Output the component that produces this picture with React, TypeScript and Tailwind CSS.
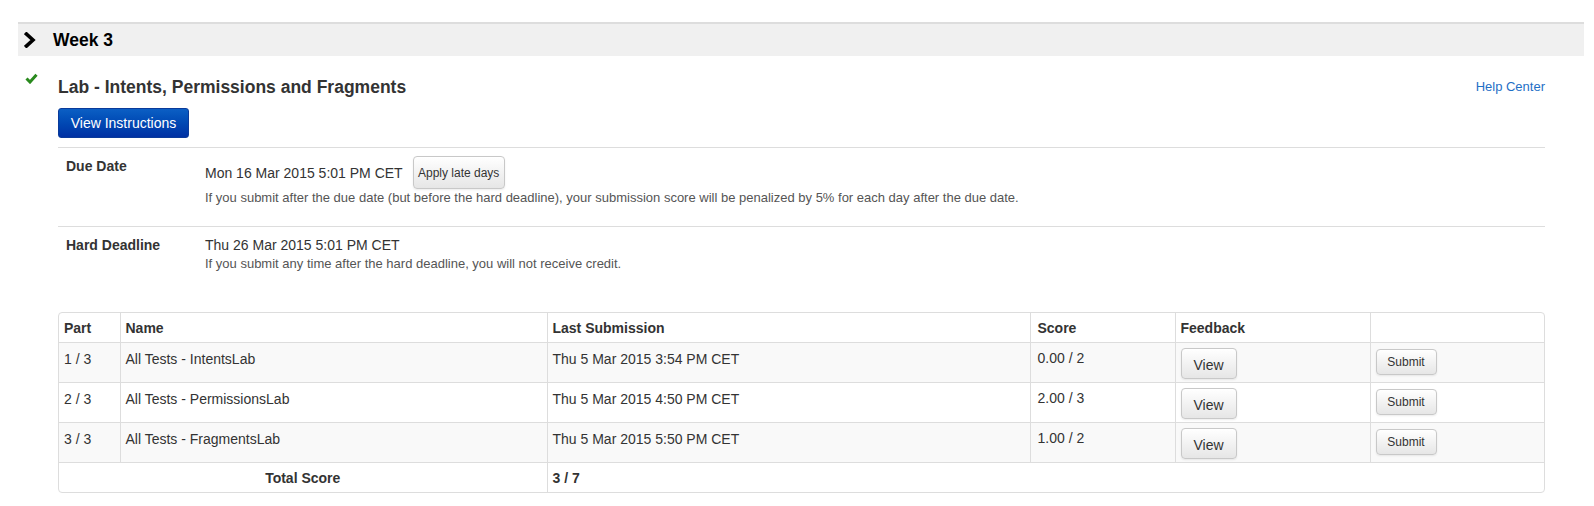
import React from "react";

type Part = { part: string; name: string; last: string; score: string };

const parts: Part[] = [
  { part: "1 / 3", name: "All Tests - IntentsLab", last: "Thu 5 Mar 2015 3:54 PM CET", score: "0.00 / 2" },
  { part: "2 / 3", name: "All Tests - PermissionsLab", last: "Thu 5 Mar 2015 4:50 PM CET", score: "2.00 / 3" },
  { part: "3 / 3", name: "All Tests - FragmentsLab", last: "Thu 5 Mar 2015 5:50 PM CET", score: "1.00 / 2" },
];

const greyBtn =
  "rounded-[4px] border border-[#c8c8c8] bg-linear-to-b from-white to-[#e6e6e6] text-[#333] shadow-[inset_0_1px_0_rgba(255,255,255,0.6),0_1px_2px_rgba(0,0,0,0.08)]";

function Chevron() {
  return (
    <svg width="12" height="16" viewBox="0 0 12 16" className="shrink-0">
      <polyline points="2.5,2 9,8 2.5,14" fill="none" stroke="#000" strokeWidth="3.6" strokeLinecap="square" />
    </svg>
  );
}

function Check() {
  return (
    <svg width="13" height="11" viewBox="0 0 13 11">
      <polyline points="1.5,5.5 5,9 11.5,1.8" fill="none" stroke="#2a8a1e" strokeWidth="3" strokeLinejoin="miter" />
    </svg>
  );
}

export default function App() {
  return (
    <div className="min-h-[506px] bg-white pt-[22px] font-['Liberation_Sans',Arial,sans-serif] text-[#333]">
      <div className="ml-[18px] mr-[10px] flex h-[34px] items-center gap-[17px] border-t-2 border-[#dddddd] bg-[#f0f0f0] pl-[6px]">
        <Chevron />
        <span className="text-[17.5px] font-bold text-black">Week 3</span>
      </div>

      <div className="flex">
        <div className="w-[58px] shrink-0 pl-[25px] pt-[17px]">
          <Check />
        </div>
        <div className="mr-[49px] flex-1">
          <div className="mt-[19px] flex items-center justify-between">
            <h2 className="text-[17.5px] font-bold leading-[24px] text-[#333]">Lab - Intents, Permissions and Fragments</h2>
            <a className="text-[13px] text-[#1f6fc6]">Help Center</a>
          </div>
          <button className="mt-[9px] h-[30px] w-[131px] rounded-[3px] border border-[#0a3a9a] bg-linear-to-b from-[#0c5fc4] to-[#0030a3] text-[14px] text-white">
            View Instructions
          </button>

          <div className="mt-[9px] grid grid-cols-[147px_1fr] border-t border-[#dddddd] pb-[19px] pt-[8px]">
            <div className="pl-[8px] text-[14px] font-bold leading-[20px]">Due Date</div>
            <div>
              <div className="flex items-center gap-[10px]">
                <span className="text-[14px] leading-[20px]">Mon 16 Mar 2015 5:01 PM CET</span>
                <button className={`${greyBtn} h-[33px] w-[92px] text-[12px]`}>Apply late days</button>
              </div>
              <p className="text-[13px] leading-[18px] text-[#555]">
                If you submit after the due date (but before the hard deadline), your submission score will be penalized by 5% for each day after the due date.
              </p>
            </div>
          </div>

          <div className="grid grid-cols-[147px_1fr] border-t border-[#dddddd] pt-[8px]">
            <div className="pl-[8px] text-[14px] font-bold leading-[20px]">Hard Deadline</div>
            <div>
              <div className="text-[14px] leading-[20px]">Thu 26 Mar 2015 5:01 PM CET</div>
              <p className="text-[13px] leading-[18px] text-[#555]">
                If you submit any time after the hard deadline, you will not receive credit.
              </p>
            </div>
          </div>

          <div className="mt-[39px] overflow-hidden rounded-[4px] border border-[#dddddd]">
            <table className="w-full border-collapse text-[14px] leading-[20px]">
              <colgroup>
                <col className="w-[61px]" />
                <col className="w-[427px]" />
                <col className="w-[483px]" />
                <col className="w-[145px]" />
                <col className="w-[195px]" />
                <col />
              </colgroup>
              <thead>
                <tr className="h-[29px] text-left align-top">
                  <th className="px-[5px] pt-[5px] font-bold">Part</th>
                  <th className="border-l border-[#dddddd] px-[5px] pt-[5px] font-bold">Name</th>
                  <th className="border-l border-[#dddddd] px-[5px] pt-[5px] font-bold">Last Submission</th>
                  <th className="border-l border-[#dddddd] px-[7px] pt-[5px] font-bold">Score</th>
                  <th className="border-l border-[#dddddd] px-[5px] pt-[5px] font-bold">Feedback</th>
                  <th className="border-l border-[#dddddd]"></th>
                </tr>
              </thead>
              <tbody>
                {parts.map((p, i) => (
                  <tr key={p.part} className={`h-[40px] align-top ${i % 2 === 0 ? "bg-[#f9f9f9]" : "bg-white"}`}>
                    <td className="border-t border-[#dddddd] px-[5px] pt-[6px]">{p.part}</td>
                    <td className="border-l border-t border-[#dddddd] px-[5px] pt-[6px]">{p.name}</td>
                    <td className="border-l border-t border-[#dddddd] px-[5px] pt-[6px]">{p.last}</td>
                    <td className="border-l border-t border-[#dddddd] px-[7px] pt-[5px]">{p.score}</td>
                    <td className="border-l border-t border-[#dddddd] px-[5px] pt-[5px]">
                      <button className={`${greyBtn} h-[31px] w-[56px] pt-[3px] text-[14px]`}>View</button>
                    </td>
                    <td className="border-l border-t border-[#dddddd] px-[5px] pt-[6px]">
                      <button className={`${greyBtn} h-[26px] w-[61px] text-[12px]`}>Submit</button>
                    </td>
                  </tr>
                ))}
                <tr className="h-[30px] align-top font-bold">
                  <td colSpan={2} className="border-t border-[#dddddd] pt-[5px] text-center">Total Score</td>
                  <td colSpan={4} className="border-l border-t border-[#dddddd] px-[5px] pt-[5px]">3 / 7</td>
                </tr>
              </tbody>
            </table>
          </div>
        </div>
      </div>
    </div>
  );
}
